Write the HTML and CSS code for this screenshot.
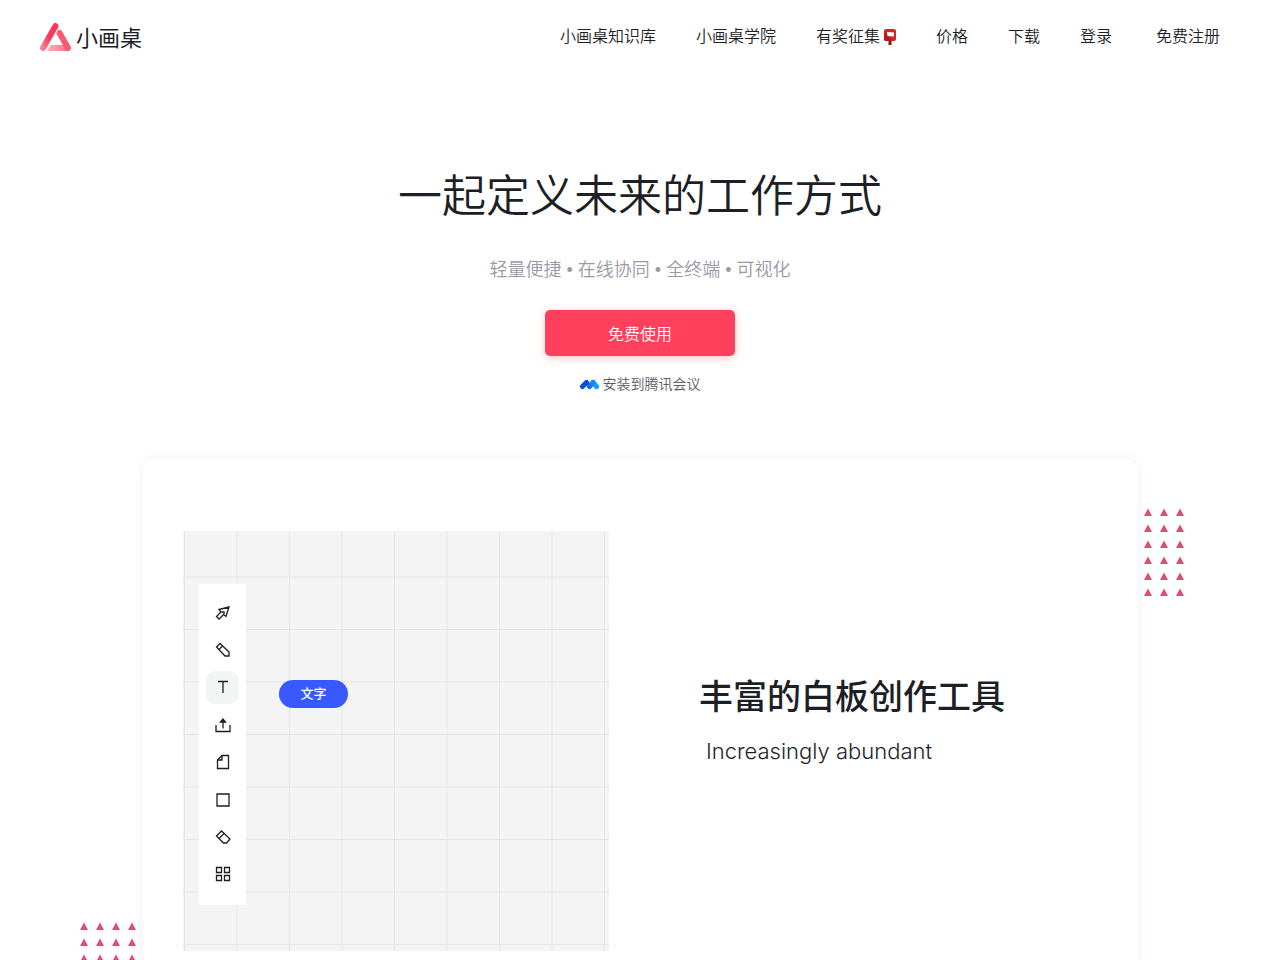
FILE: index.html
```html
<!DOCTYPE html>
<html lang="zh-CN">
<head>
<meta charset="UTF-8">
<meta name="viewport" content="width=device-width, initial-scale=1.0">
<title>小画桌</title>
<link rel="stylesheet" href="styles.css">
</head>
<body>
    <header class="header">
        <a class="logo" href="#">
            <svg width="32" height="30" viewBox="0 0 32 30">
                <defs>
                    <linearGradient id="side" x1="0" y1="1" x2="1" y2="0">
                        <stop offset="0" stop-color="#ff7d92"/>
                        <stop offset=".45" stop-color="#f83b5c"/>
                    </linearGradient>
                    <linearGradient id="base" x1="0" y1="0" x2="1" y2="0">
                        <stop offset="0" stop-color="#ffb0bc"/>
                        <stop offset="1" stop-color="#ff6f87"/>
                    </linearGradient>
                </defs>
                <path d="M7 29l4-6h14l3 6z" fill="url(#base)"/>
                <path d="M19.500 11L28 26" stroke="#fb5a75" stroke-width="6" stroke-linecap="round"/>
                <path d="M3 26L15.500 4" stroke="#fff" stroke-width="8"/>
                <path d="M3 26L15.500 4" stroke="url(#side)" stroke-width="6" stroke-linecap="round"/>
            </svg>
            <span>小画桌</span>
        </a>
        <nav class="nav">
            <a href="#">小画桌知识库</a>
            <a href="#">小画桌学院</a>
            <a class="prize" href="#">有奖征集<svg width="16" height="18" viewBox="0 0 16 18">
                <path d="M8.500 11h3v6h-3z" fill="#8e1416"/>
                <rect x="4" y="1" width="12" height="12" rx="2" fill="#d3262b"/>
                <path d="M4 4v7a2 2 0 0 0 2 2h7L4 4z" fill="#b5181d"/>
                <path d="M7 4l7 .500v4L7.500 8z" fill="#fff"/>
            </svg></a>
            <a href="#">价格</a>
            <a href="#">下载</a>
            <a href="#">登录</a>
            <a class="signup" href="#">免费注册</a>
        </nav>
    </header>

    <main>
        <section class="hero">
            <h1>一起定义未来的工作方式</h1>
            <p class="slogan">轻量便捷 • 在线协同 • 全终端 • 可视化</p>
            <button class="btn-start" type="button">免费使用</button>
            <a class="install" href="#">
                <svg width="20" height="12" viewBox="0 0 20 12">
                    <path d="M13 4.500L16.500 8.500" stroke="#1a9bff" stroke-width="5" stroke-linecap="round"/>
                    <path d="M9.500 8.500L13 4.500" stroke="#0a8bf5" stroke-width="5" stroke-linecap="round"/>
                    <path d="M6.500 4.500L9.500 8.500" stroke="#1768ff" stroke-width="4" stroke-linecap="round"/>
                    <path d="M2.500 8.500L6.500 4.500" stroke="#0b4be0" stroke-width="5" stroke-linecap="round"/>
                </svg>
                安装到腾讯会议
            </a>
        </section>

        <section class="showcase">
            <!-- 左右两侧的三角形装饰 -->
            <svg class="dots dots-right" width="48" height="96">
                <defs>
                    <pattern id="tri" width="16" height="16" patternUnits="userSpaceOnUse">
                        <path d="M8 4.500l4 7.500H4z" fill="#e8486a"/>
                    </pattern>
                </defs>
                <rect width="48" height="96" fill="url(#tri)"/>
            </svg>
            <svg class="dots dots-left" width="64" height="96">
                <rect width="64" height="96" fill="url(#tri)"/>
            </svg>

            <div class="card">
                <div class="board">
                    <!-- 白板网格 -->
                    <svg class="grid" width="100%" height="100%">
                        <defs>
                            <pattern id="cell" x="1" y="45.500" width="52.500" height="52.500" patternUnits="userSpaceOnUse">
                                <path d="M.500 0v52.500M0 .500h52.500" stroke="#e5e5e5" fill="none"/>
                            </pattern>
                        </defs>
                        <rect width="100%" height="100%" fill="url(#cell)"/>
                    </svg>
                    <div class="toolbar">
                        <button type="button" aria-label="选择"><svg viewBox="0 0 16 16"><path d="M14 2L4 4.500l2 2.500-4.500 4.500 2.500 2.500L8.500 9.500l2.500 2z"/><path d="M6.500 7h2.500v2.500"/></svg></button>
                        <button type="button" aria-label="画笔"><svg viewBox="0 0 16 16"><path d="M1.500 5L5 1.500l9 8.500v4H10z"/><path d="M4 7.500L7.500 4"/></svg></button>
                        <button class="active" type="button" aria-label="文字"><svg viewBox="0 0 16 16"><path d="M3 2.500h10M8 2.500V14"/></svg></button>
                        <button type="button" aria-label="上传"><svg viewBox="0 0 16 16"><path d="M1 8v6.500h14V8M8 11.500V3"/><path d="M5.500 5L8 2l2.500 3z" fill="#1d1f27"/></svg></button>
                        <button type="button" aria-label="便签"><svg viewBox="0 0 16 16"><path d="M7 1.500h6.500v13h-11V6z"/><path d="M7 1.500V6H2.500"/></svg></button>
                        <button type="button" aria-label="图形"><svg viewBox="0 0 16 16"><path d="M2 2h12v12H2z"/></svg></button>
                        <button type="button" aria-label="橡皮"><svg viewBox="0 0 16 16"><path d="M1.500 7L6.500 2l8.500 8-3.500 4H8.500z"/><path d="M4 9.500l5-5"/></svg></button>
                        <button type="button" aria-label="更多"><svg viewBox="0 0 16 16"><path d="M1.500 1.500h5v5h-5zM9.500 1.500h5v5h-5zM1.500 9.500h5v5h-5zM9.500 9.500h5v5h-5z"/></svg></button>
                    </div>
                    <span class="tip">文字</span>
                </div>
                <div class="intro">
                    <h2>丰富的白板创作工具</h2>
                    <p>Increasingly abundant</p>
                </div>
            </div>
        </section>
    </main>
</body>
</html>
```
FILE: styles.css
```css
*{
    box-sizing: border-box;
}
body{
    margin: 0;
    background: #fff;
    color: #1d1f27;
    font-family: "Liberation Sans", "Noto Sans CJK SC", sans-serif;
    font-size: 16px;
    font-weight: 350;
    overflow-x: hidden;
}
a{
    color: inherit;
    text-decoration: none;
}
h1, h2, p{
    margin: 0;
    font-weight: 350;
}
button{
    border: 0;
    font-family: inherit;
    font-weight: inherit;
    cursor: pointer;
}

/* 顶部导航 */
.header{
    display: flex;
    align-items: center;
    justify-content: space-between;
    height: 74px;
    padding: 0 60px 0 40px;
}
.logo{
    display: flex;
    align-items: center;
    gap: 4px;
    font-size: 22px;
    font-weight: 400;
    line-height: 32px;
}
.logo span{
    padding-top: 4px;
}
.nav{
    display: flex;
    gap: 40px;
    line-height: 24px;
}
.prize{
    display: flex;
    align-items: center;
}
.signup{
    padding-left: 4px;
}

/* 首屏 */
.hero{
    display: flex;
    flex-direction: column;
    align-items: center;
    padding-top: 91px;
}
.hero h1{
    font-size: 44px;
    line-height: 64px;
}
.slogan{
    margin-top: 28px;
    color: #989ba6;
    font-size: 18px;
    line-height: 26px;
}
.btn-start{
    width: 190px;
    height: 46px;
    margin-top: 27px;
    border-radius: 5px;
    background: #ff405d;
    box-shadow: 0 2px 8px rgba(255, 64, 93, .3);
    color: #fff;
    font-size: 16px;
}
.install{
    display: flex;
    align-items: center;
    gap: 3px;
    margin-top: 18px;
    color: #5a5d66;
    font-size: 14px;
    line-height: 20px;
}

/* 白板展示卡片 */
.showcase{
    position: relative;
    max-width: 1120px;
    margin: 65px auto 0;
    padding: 0 62px 0 63px;
}
.card{
    position: relative;
    display: flex;
    align-items: center;
    padding: 72px 40px;
    border-radius: 12px;
    background: #fff;
    box-shadow: 0 0 12px rgba(0, 0, 0, .06);
}
.dots{
    position: absolute;
}
.dots-right{
    top: 45px;
    right: 12px;
}
.dots-left{
    top: 459px;
    left: -4px;
}
.board{
    position: relative;
    flex: 0 0 426px;
    height: 420px;
    padding: 53px 16px;
    background: #f4f4f4;
}
.grid{
    position: absolute;
    top: 0;
    left: 0;
}
.toolbar{
    position: relative;
    display: flex;
    flex-direction: column;
    align-items: center;
    justify-content: space-between;
    width: 47px;
    height: 321px;
    padding: 12px 0 14px;
    border-radius: 2px;
    background: #fff;
}
.toolbar button{
    display: flex;
    align-items: center;
    justify-content: center;
    width: 33px;
    height: 33px;
    padding: 0;
    border-radius: 9px;
    background: none;
}
.toolbar .active{
    background: #f3f5f5;
}
.toolbar svg{
    width: 16px;
    height: 16px;
    fill: none;
    stroke: #1d1f27;
    stroke-width: 1.3;
}
/* 当前工具的提示气泡 */
.tip{
    position: absolute;
    top: 149px;
    left: 96px;
    width: 69px;
    border-radius: 14px;
    background: #3859ff;
    color: #fff;
    font-size: 13px;
    font-weight: 500;
    line-height: 28px;
    text-align: center;
}
.intro{
    padding: 0 0 44px 90px;
}
.intro h2{
    font-size: 34px;
    font-weight: 500;
    line-height: 52px;
}
.intro p{
    margin-top: 12px;
    padding-left: 7px;
    font-family: Inter, "Liberation Sans", sans-serif;
    font-size: 22px;
    font-weight: 300;
    line-height: 32px;
}
```
